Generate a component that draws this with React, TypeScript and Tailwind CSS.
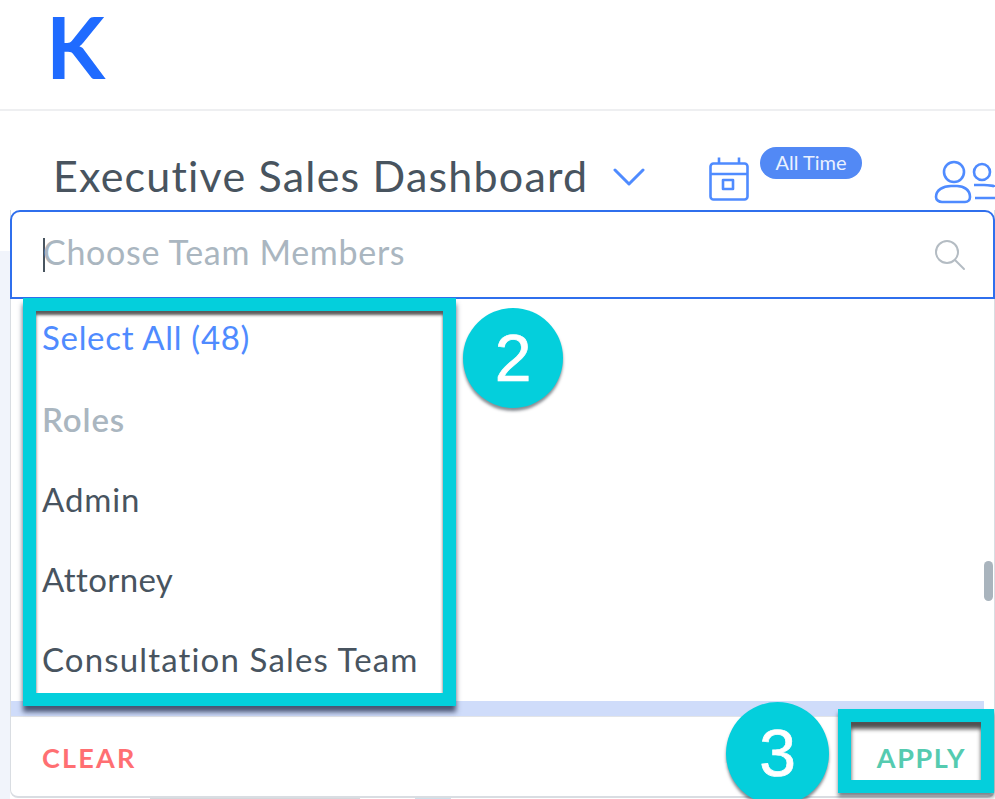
import React from "react";

const sans = "font-['Lato','Open_Sans',sans-serif]";

const Callout: React.FC<{ n: string; className: string }> = ({ n, className }) => (
  <div
    className={`absolute rounded-full bg-[#04cfdc] text-white flex items-center justify-center font-['Liberation_Sans',sans-serif] text-[66px] [-webkit-text-stroke:0.7px_white] shadow-[0_3px_3px_rgba(40,50,60,0.55)] ${className}`}
  >
    {n}
  </div>
);

const App: React.FC = () => {
  return (
    <div className={`relative w-[995px] h-[799px] overflow-hidden bg-white ${sans}`}>
      <header className="h-[111px] border-b-2 border-[#eeeff1] pl-[46px] flex items-start">
        <span className="font-['Lato',sans-serif] font-bold text-[86px] leading-[92px] text-[#1f6bff]">
          K
        </span>
      </header>

      <div className="h-[98px] flex items-start pl-[53px] pt-[37px] relative">
        <h1 className="text-[43px] leading-[56px] text-[#48545f] font-normal tracking-[1.2px] whitespace-nowrap">
          Executive Sales Dashboard
        </h1>
        <svg className="ml-[25px] mt-[19px]" width="32" height="22" viewBox="0 0 32 22" fill="none" stroke="#4f8bff" strokeWidth="3" strokeLinecap="round" strokeLinejoin="round">
          <path d="M2 3l14 14L30 3" />
        </svg>
        <svg className="absolute left-[708px] top-[45px]" width="42" height="46" viewBox="0 0 42 46" fill="none" stroke="#4f8bff" strokeWidth="2.6" strokeLinejoin="round">
          <rect x="2.5" y="7.5" width="37" height="36" rx="3" />
          <path d="M2.5 18h37M11 1.5v6M31 1.5v6" />
          <rect x="15" y="24" width="10" height="9" />
        </svg>
        <div className="absolute left-[760px] top-[36px] w-[102px] h-[32px] pb-[2px] rounded-full bg-[#5289f5] text-[#eaf1ff] text-[20px] flex items-center justify-center">
          All Time
        </div>
        <svg className="absolute left-[934px] top-[48px]" width="61" height="46" viewBox="0 0 61 46" fill="none" stroke="#4f8bff" strokeWidth="2.6">
          <circle cx="20" cy="13" r="10" />
          <path d="M8 43h23c3 0 5-2 5-5 0-7-6-11-13-11h-6C9 27 2 31 2 38c0 3 3 5 6 5z" />
          <circle cx="48" cy="13" r="8" />
          <path d="M40 26h10c5 0 11 1 11 2M41 39h20" />
        </svg>
      </div>

      {/* page behind the dropdown */}
      <div className="absolute left-0 top-[251px] w-[10px] h-[548px] bg-[#f1f4fb]" />
      <div className="absolute left-[150px] top-[796px] w-[210px] h-[3px] bg-[#d5d8dc]" />
      <div className="absolute left-[415px] top-[795px] w-[36px] h-[4px] bg-[#cfe0ea]" />

      {/* dropdown */}
      <div className="absolute left-[10px] top-[210px] w-[985px] h-[588px] flex flex-col bg-white rounded-b-[8px] border-x border-b-2 border-[#d9dde2]">
        <div className="-mx-px h-[89px] shrink-0 border-2 border-[#2f6fed] rounded-t-[10px] bg-white flex items-center pl-[31px] pr-[27px]">
          <div className="w-[2px] h-[34px] bg-[#48545f]" />
          <span className="text-[34px] tracking-[0.7px] text-[#aab6c0] flex-1 leading-none -ml-[2px] -mt-[6px]">Choose Team Members</span>
          <svg width="32" height="32" viewBox="0 0 32 32" fill="none" stroke="#b4bcc3" strokeWidth="2" strokeLinecap="round">
            <circle cx="13" cy="13" r="11" />
            <path d="M21 21l9 9" />
          </svg>
        </div>
        <div className="relative flex-1 flex flex-col pl-[31px] pt-[18px] text-[33px] tracking-[0.9px] leading-[40px] text-[#48545f]">
          <div className="text-[#4f8bff] tracking-[0.7px]">Select All (48)</div>
          <div className="mt-[42px] font-semibold text-[#aab6c0]">Roles</div>
          <div className="mt-[40px]">Admin</div>
          <div className="mt-[40px] tracking-[0.4px]">Attorney</div>
          <div className="mt-[40px] tracking-[1.15px]">Consultation Sales Team</div>
          <div className="absolute right-[1px] top-[262px] w-[9px] h-[40px] rounded-full bg-[#a9b4bd]" />
        </div>
        <div className="h-[15px] mr-[10px] shrink-0 bg-[#cfdcfa]" />
        <div className="h-[80px] shrink-0 border-t border-[#e2e4e8] flex items-center justify-between pl-[31px] pr-[28px] pt-[4px] text-[27px] font-bold">
          <span className="text-[#ff6f72] tracking-[2.2px]">CLEAR</span>
          <span className="text-[#55cbb0] tracking-[1.6px]">APPLY</span>
        </div>
      </div>

      {/* tutorial annotations */}
      <div className="absolute left-[23px] top-[298px] w-[433px] h-[408px] border-[13px] border-[#04cfdc] shadow-[inset_0_4px_3px_rgba(50,50,50,0.8),0_6px_5px_rgba(40,50,80,0.8)]" />
      <div className="absolute left-[838px] top-[709px] w-[156px] h-[84px] border-[13px] border-[#04cfdc] shadow-[inset_0_7px_4px_rgba(50,50,50,0.85),0_4px_4px_rgba(40,50,60,0.6)]" />
      <Callout n="2" className="left-[463px] top-[308px] w-[100px] h-[100px]" />
      <Callout n="3" className="left-[726px] top-[702px] w-[103px] h-[103px]" />
    </div>
  );
};

export default App;
